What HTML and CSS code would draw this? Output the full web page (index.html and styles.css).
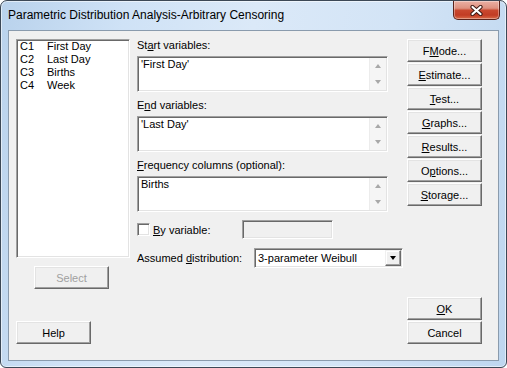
FILE: index.html
```html
<!DOCTYPE html>
<html>
<head>
<meta charset="utf-8">
<link rel="stylesheet" href="styles.css">
</head>
<body>
<div class="window">
  <div class="titlebar">
    <span class="title">Parametric Distribution Analysis-Arbitrary Censoring</span>
    <div class="close">
      <svg width="13" height="11" viewBox="0 0 13 11">
        <path d="M2.5 2 L10.5 9 M10.5 2 L2.5 9" stroke="#3d1a14" stroke-width="4.2" stroke-linecap="round"/>
        <path d="M2.5 2 L10.5 9 M10.5 2 L2.5 9" stroke="#ffffff" stroke-width="2.2" stroke-linecap="round"/>
      </svg>
    </div>
  </div>
  <div class="client">
    <div class="col-left">
      <div class="listbox">
        <div class="item"><span class="c">C1</span><span>First Day</span></div>
        <div class="item"><span class="c">C2</span><span>Last Day</span></div>
        <div class="item"><span class="c">C3</span><span>Births</span></div>
        <div class="item"><span class="c">C4</span><span>Week</span></div>
      </div>
      <button class="btn select" disabled>Select</button>
      <button class="btn help">Help</button>
    </div>
    <div class="col-mid">
      <div class="label">St<u>a</u>rt variables:</div>
      <div class="tbox">
        <div class="tbox-text">'First Day'</div>
        <div class="vscroll"><span class="arr-up"></span><span class="arr-down"></span></div>
      </div>
      <div class="label next">E<u>n</u>d variables:</div>
      <div class="tbox">
        <div class="tbox-text">'Last Day'</div>
        <div class="vscroll"><span class="arr-up"></span><span class="arr-down"></span></div>
      </div>
      <div class="label next"><u>F</u>requency columns (optional):</div>
      <div class="tbox">
        <div class="tbox-text">Births</div>
        <div class="vscroll"><span class="arr-up"></span><span class="arr-down"></span></div>
      </div>
      <div class="byrow">
        <span class="check"></span>
        <span class="bylabel"><u>B</u>y variable:</span>
        <span class="field"></span>
      </div>
      <div class="distrow">
        <span class="distlabel">Assumed <u>d</u>istribution:</span>
        <div class="combo">
          <span class="combo-text">3-parameter Weibull</span>
          <span class="drop"><span class="arr-black"></span></span>
        </div>
      </div>
    </div>
    <div class="col-right">
      <button class="btn">F<u>M</u>ode...</button>
      <button class="btn"><u>E</u>stimate...</button>
      <button class="btn"><u>T</u>est...</button>
      <button class="btn"><u>G</u>raphs...</button>
      <button class="btn"><u>R</u>esults...</button>
      <button class="btn">O<u>p</u>tions...</button>
      <button class="btn"><u>S</u>torage...</button>
      <button class="btn ok"><u>O</u>K</button>
      <button class="btn">Cancel</button>
    </div>
  </div>
</div>
</body>
</html>
```
FILE: styles.css
```css
html, body {
  margin: 0;
  padding: 0;
  background: #ffffff;
}
body {
  font-family: "Liberation Sans", Arial, sans-serif;
  font-size: 11px;
  color: #000;
}
.window {
  width: 507px;
  height: 368px;
  box-sizing: border-box;
  border: 1px solid #3c4856;
  border-radius: 7px 7px 6px 6px;
  background: linear-gradient(100deg, #b9d2ec 0%, #cfe2f6 22%, #dbe9f8 45%, #d3e4f6 70%, #bed6ef 100%);
  box-shadow: inset 0 0 0 1px rgba(255,255,255,0.55);
  display: flex;
  flex-direction: column;
  overflow: hidden;
}
.titlebar {
  height: 29px;
  flex: none;
  display: flex;
  align-items: flex-start;
}
.title {
  margin: 7px 0 0 7px;
  font-size: 12px;
  line-height: 14px;
  color: #000;
}
.close {
  margin-left: auto;
  margin-right: 6px;
  width: 47px;
  height: 19px;
  box-sizing: border-box;
  border: 1px solid #5b231b;
  border-top: none;
  border-radius: 0 0 5px 5px;
  background: linear-gradient(180deg, #eab0a4 0%, #de9180 40%, #c9482f 52%, #c23c24 78%, #d86a48 100%);
  box-shadow: inset 0 0 0 1px rgba(255,255,255,0.35);
  display: flex;
  align-items: center;
  justify-content: center;
}
.client {
  margin: 0 7px;
  width: 491px;
  height: 331px;
  box-sizing: border-box;
  border: 1px solid #8a9bad;
  background: #f0f0f0;
  display: flex;
  padding: 8px 16px 0 7px;
}
.col-left {
  width: 114px;
  display: flex;
  flex-direction: column;
}
.listbox {
  height: 219px;
  box-sizing: border-box;
  background: #fff;
  border: 1px solid;
  border-color: #a0a0a0 #ffffff #ffffff #a0a0a0;
  box-shadow: inset 1px 1px #696969, inset -1px -1px #e3e3e3;
  padding: 0 0 0 3px;
}
.item {
  display: flex;
  line-height: 13px;
  height: 13px;
}
.item .c {
  width: 27px;
}
.btn {
  box-sizing: border-box;
  width: 75px;
  height: 23px;
  padding: 0;
  margin: 0;
  background: #f0f0f0;
  border: 1px solid;
  border-color: #ffffff #696969 #696969 #ffffff;
  box-shadow: inset -1px -1px #a0a0a0, inset 1px 1px #e3e3e3;
  font-family: "Liberation Sans", Arial, sans-serif;
  font-size: 11px;
  color: #000;
  text-align: center;
  flex: none;
}
.select {
  margin: 8px 0 0 18px;
  color: #a0a0a0;
}
.help {
  margin-top: 32px;
}
.col-mid {
  width: 267px;
  margin-left: 7px;
  display: flex;
  flex-direction: column;
}
.label {
  line-height: 13px;
  height: 13px;
  margin-bottom: 4px;
}
.label.next {
  margin-top: 7px;
}
.tbox {
  width: 251px;
  height: 36px;
  box-sizing: border-box;
  background: #fff;
  border: 1px solid;
  border-color: #a0a0a0 #ffffff #ffffff #a0a0a0;
  box-shadow: inset 1px 1px #696969, inset -1px -1px #e3e3e3;
  display: flex;
  flex: none;
}
.tbox-text {
  flex: 1;
  padding: 1px 0 0 3px;
  line-height: 13px;
}
.vscroll {
  width: 16px;
  margin: 1px 1px 1px 0;
  background: #f5f5f5;
  border-left: 1px solid #ececec;
  display: flex;
  flex-direction: column;
  justify-content: space-between;
  align-items: center;
  padding: 6px 0 6px;
}
.arr-up {
  width: 0;
  height: 0;
  border-left: 3.5px solid transparent;
  border-right: 3.5px solid transparent;
  border-bottom: 4px solid #a8a8a8;
}
.arr-down {
  width: 0;
  height: 0;
  border-left: 3.5px solid transparent;
  border-right: 3.5px solid transparent;
  border-top: 4px solid #a8a8a8;
}
.byrow {
  margin-top: 8px;
  height: 19px;
  display: flex;
  align-items: center;
}
.check {
  width: 13px;
  height: 13px;
  box-sizing: border-box;
  background: #fff;
  border: 1px solid;
  border-color: #a0a0a0 #ffffff #ffffff #a0a0a0;
  box-shadow: inset 1px 1px #696969, inset -1px -1px #e3e3e3;
  flex: none;
}
.bylabel {
  margin-left: 3px;
  width: 89px;
  flex: none;
}
.field {
  width: 91px;
  height: 19px;
  box-sizing: border-box;
  background: #f0f0f0;
  border: 1px solid;
  border-color: #a0a0a0 #ffffff #ffffff #a0a0a0;
  box-shadow: inset 1px 1px #696969, inset -1px -1px #e3e3e3;
  flex: none;
}
.distrow {
  margin-top: 9px;
  height: 20px;
  display: flex;
  align-items: center;
}
.distlabel {
  width: 117px;
  flex: none;
}
.combo {
  width: 149px;
  height: 20px;
  box-sizing: border-box;
  background: #fff;
  border: 1px solid;
  border-color: #a0a0a0 #ffffff #ffffff #a0a0a0;
  box-shadow: inset 1px 1px #696969, inset -1px -1px #e3e3e3;
  display: flex;
  align-items: center;
  flex: none;
}
.combo-text {
  flex: 1;
  padding-left: 3px;
}
.drop {
  width: 16px;
  height: 16px;
  margin-right: 1px;
  box-sizing: border-box;
  background: #f0f0f0;
  border: 1px solid;
  border-color: #f0f0f0 #696969 #696969 #f0f0f0;
  box-shadow: inset -1px -1px #a0a0a0, inset 1px 1px #ffffff;
  display: flex;
  align-items: center;
  justify-content: center;
}
.arr-black {
  width: 0;
  height: 0;
  border-left: 3.5px solid transparent;
  border-right: 3.5px solid transparent;
  border-top: 4px solid #000;
}
.col-right {
  width: 75px;
  margin-left: 3px;
  display: flex;
  flex-direction: column;
  gap: 1px;
  padding-bottom: 16px;
}
.ok {
  margin-top: auto;
}
```
